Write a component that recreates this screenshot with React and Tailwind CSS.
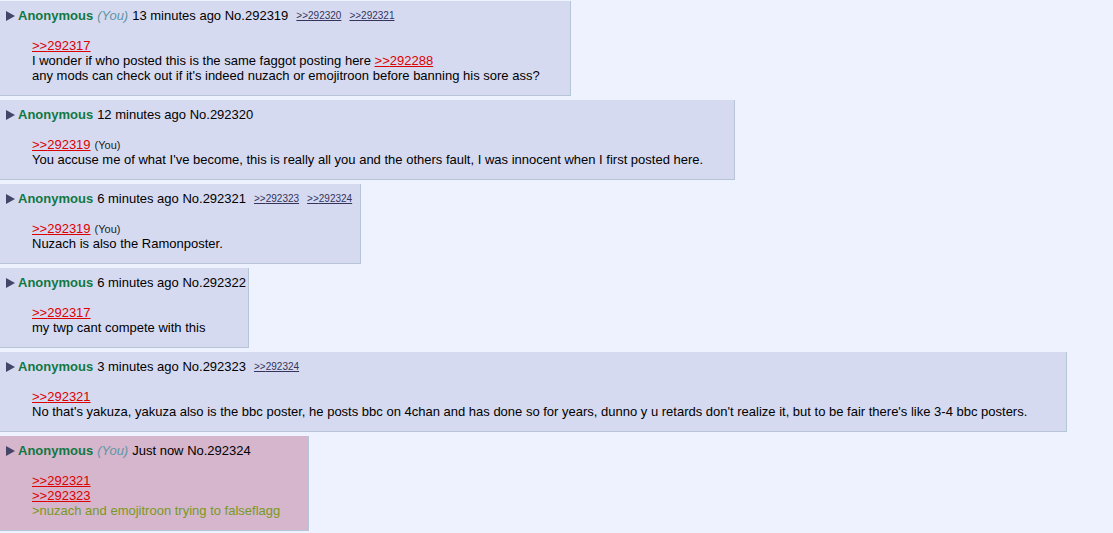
import React from 'react';

const Arrow = () => (
  <svg width="9" height="10" viewBox="0 0 9 10" className="mr-[3px] shrink-0">
    <polygon points="0,0 9,5 0,10" fill="#45456a" />
  </svg>
);

const QuoteLink = ({ n }) => (
  <span className="text-[#dd0000] underline">&gt;&gt;{n}</span>
);

const BackLink = ({ n }) => (
  <span className="ml-[8px] text-[10px] text-[#34345c] underline">&gt;&gt;{n}</span>
);

const You = () => <span className="ml-[4px] text-[11px] leading-none text-[#222]">(You)</span>;

const posts = [
  {
    w: 'w-[571px]',
    you: true,
    time: '13 minutes ago',
    no: '292319',
    backlinks: ['292320', '292321'],
    body: (
      <>
        <div><QuoteLink n="292317" /></div>
        <div>I wonder if who posted this is the same faggot posting here <QuoteLink n="292288" /></div>
        <div>any mods can check out if it's indeed nuzach or emojitroon before banning his sore ass?</div>
      </>
    ),
  },
  {
    w: 'w-[735px]',
    time: '12 minutes ago',
    no: '292320',
    backlinks: [],
    body: (
      <>
        <div><QuoteLink n="292319" /><You /></div>
        <div>You accuse me of what I've become, this is really all you and the others fault, I was innocent when I first posted here.</div>
      </>
    ),
  },
  {
    w: 'w-[361px]',
    time: '6 minutes ago',
    no: '292321',
    backlinks: ['292323', '292324'],
    body: (
      <>
        <div><QuoteLink n="292319" /><You /></div>
        <div>Nuzach is also the Ramonposter.</div>
      </>
    ),
  },
  {
    w: 'w-[249px]',
    time: '6 minutes ago',
    no: '292322',
    backlinks: [],
    body: (
      <>
        <div><QuoteLink n="292317" /></div>
        <div>my twp cant compete with this</div>
      </>
    ),
  },
  {
    w: 'w-[1067px]',
    time: '3 minutes ago',
    no: '292323',
    backlinks: ['292324'],
    body: (
      <>
        <div><QuoteLink n="292321" /></div>
        <div>No that's yakuza, yakuza also is the bbc poster, he posts bbc on 4chan and has done so for years, dunno y u retards don't realize it, but to be fair there's like 3-4 bbc posters.</div>
      </>
    ),
  },
  {
    w: 'w-[309px]',
    you: true,
    highlight: true,
    time: 'Just now',
    no: '292324',
    backlinks: [],
    body: (
      <>
        <div><QuoteLink n="292321" /></div>
        <div><QuoteLink n="292323" /></div>
        <div className="text-[#789922]">&gt;nuzach and emojitroon trying to falseflagg</div>
      </>
    ),
  },
];

const Post = ({ post }) => (
  <div
    className={`${post.w} ${post.highlight ? 'bg-[#d6b6cc]' : 'bg-[#d6daf0]'} border-r border-b border-[#b7c5d9] pt-[7px] pb-[12px]`}
  >
    <div className="flex items-center h-[15px] pl-[6px] whitespace-nowrap">
      <Arrow />
      <span className="font-bold text-[#117743]">Anonymous</span>
      {post.you && <span className="ml-[4px] italic text-[#5f95a3]">(You)</span>}
      <span className="ml-[4px]">{post.time} No.{post.no}</span>
      {post.backlinks.map((b) => (
        <BackLink key={b} n={b} />
      ))}
    </div>
    <div className="mt-[15px] ml-[32px] leading-[15px] whitespace-nowrap [&>div]:h-[15px]">{post.body}</div>
  </div>
);

export default function App() {
  return (
    <div
      className="min-h-[533px] bg-[#eef2ff] pt-[1px] flex flex-col items-start gap-[4px] text-[13px] leading-[15px] text-black"
      style={{ fontFamily: '"Liberation Sans", Arial, sans-serif' }}
    >
      {posts.map((p) => (
        <Post key={p.no} post={p} />
      ))}
    </div>
  );
}
